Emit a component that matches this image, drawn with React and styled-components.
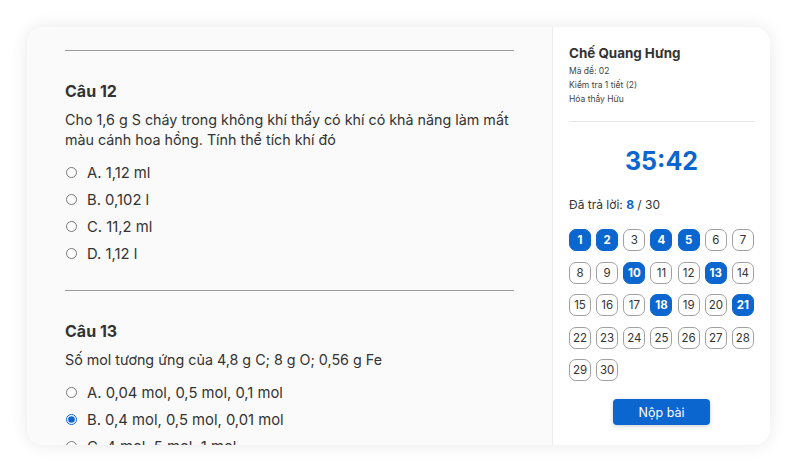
import styled, { createGlobalStyle, css } from 'styled-components';

const GlobalStyle = createGlobalStyle`
	* {
		box-sizing: border-box;
	}
	body {
		margin: 0;
		background: #ffffff;
		font-family: Inter, 'Noto Sans', sans-serif;
		color: #333333;
	}
`;

const Page = styled.div`
	padding: 27px;
	height: 472px;
`;

const Card = styled.div`
	display: flex;
	height: 418px;
	border-radius: 16px;
	overflow: hidden;
	background-color: #fafafa;
	box-shadow: 0 0 18px rgba(0, 0, 0, 0.09);
`;

/* Questions column */
const Questions = styled.div`
	flex: 1;
	padding: 23px 38px 0;
	overflow: hidden;
`;

const Section = styled.section`
	border-top: 1px solid #9a9a9a;
	padding: 30px 0 23px;
`;

const Title = styled.h3`
	margin: 0 0 9px;
	font-size: 16px;
	line-height: 20px;
	font-weight: 700;
	color: #333;
`;

const Text = styled.p`
	margin: 0;
	font-size: 14.3px;
	line-height: 20px;
	color: #333;
`;

const Options = styled.div`
	margin-top: 9px;
	display: flex;
	flex-direction: column;
`;

const Option = styled.label`
	display: flex;
	align-items: center;
	height: 27px;
	gap: 10px;
	font-size: 14.8px;
	color: #333;

	& input {
		margin: 0 0 0 1px;
		width: 11px;
		height: 11px;
		accent-color: #0b66cf;
	}
`;

/* Sidebar */
const Sidebar = styled.aside`
	width: 218px;
	flex-shrink: 0;
	background-color: #ffffff;
	border-left: 1px solid #ececec;
	padding: 17px 16px 20px 16px;
	display: flex;
	flex-direction: column;
`;

const Name = styled.h4`
	margin: 0;
	font-size: 13.4px;
	line-height: 18px;
	font-weight: 700;
	color: #333;
`;

const Meta = styled.div`
	margin-top: 2px;
	font-size: 8.5px;
	line-height: 14px;
	color: #444;
	padding-bottom: 15px;
	border-bottom: 1px solid #e6e6e6;
`;

const Timer = styled.div`
	margin-top: 22px;
	text-align: center;
	font-size: 25px;
	line-height: 34px;
	font-weight: 700;
	color: #0b66cf;
`;

const Answered = styled.div`
	margin-top: 19px;
	font-size: 12px;
	line-height: 16px;
	color: #333;

	& b {
		color: #0b66cf;
	}
`;

const Grid = styled.div`
	margin-top: 16px;
	display: grid;
	grid-template-columns: repeat(7, 22px);
	justify-content: space-between;
	row-gap: 10.5px;
`;

const Num = styled.div`
	height: 22px;
	display: flex;
	align-items: center;
	justify-content: center;
	border-radius: 7px;
	font-size: 11.5px;
	border: 1px solid #a0a0a0;
	color: #333;
	background: #fff;

	${(props) =>
		props.$done &&
		css`
			border-color: #0b66cf;
			background: #0b66cf;
			color: #fff;
			font-weight: 700;
		`}
`;

const Submit = styled.button`
	margin: 18px auto 0;
	width: 97px;
	height: 27px;
	border: none;
	border-radius: 4px;
	background: #0b66cf;
	color: #fff;
	font-family: inherit;
	font-size: 12.5px;
	box-shadow: 0 1px 4px rgba(0, 0, 0, 0.2);
`;

const questions = [
	{
		id: 12,
		text: 'Cho 1,6 g S cháy trong không khí thấy có khí có khả năng làm mất màu cánh hoa hồng. Tính thể tích khí đó',
		options: ['A. 1,12 ml', 'B. 0,102 l', 'C. 11,2 ml', 'D. 1,12 l'],
		picked: -1,
	},
	{
		id: 13,
		text: 'Số mol tương ứng của 4,8 g C; 8 g O; 0,56 g Fe',
		options: ['A. 0,04 mol, 0,5 mol, 0,1 mol', 'B. 0,4 mol, 0,5 mol, 0,01 mol', 'C. 4 mol, 5 mol, 1 mol'],
		picked: 1,
	},
];

const done = [1, 2, 4, 5, 10, 13, 18, 21];

function App() {
	return (
		<>
			<GlobalStyle />
			<Page>
				<Card>
					<Questions>
						{questions.map((q) => (
							<Section key={q.id}>
								<Title>Câu {q.id}</Title>
								<Text>{q.text}</Text>
								<Options>
									{q.options.map((o, i) => (
										<Option key={o}>
											<input type="radio" name={`q${q.id}`} defaultChecked={q.picked === i} />
											{o}
										</Option>
									))}
								</Options>
							</Section>
						))}
					</Questions>
					<Sidebar>
						<Name>Chế Quang Hưng</Name>
						<Meta>
							<div>Mã đề: 02</div>
							<div>Kiểm tra 1 tiết (2)</div>
							<div>Hóa thầy Hữu</div>
						</Meta>
						<Timer>35:42</Timer>
						<Answered>
							Đã trả lời: <b>8</b> / 30
						</Answered>
						<Grid>
							{Array.from({ length: 30 }, (_, i) => i + 1).map((n) => (
								<Num key={n} $done={done.includes(n)}>
									{n}
								</Num>
							))}
						</Grid>
						<Submit>Nộp bài</Submit>
					</Sidebar>
				</Card>
			</Page>
		</>
	);
}

export default App;
